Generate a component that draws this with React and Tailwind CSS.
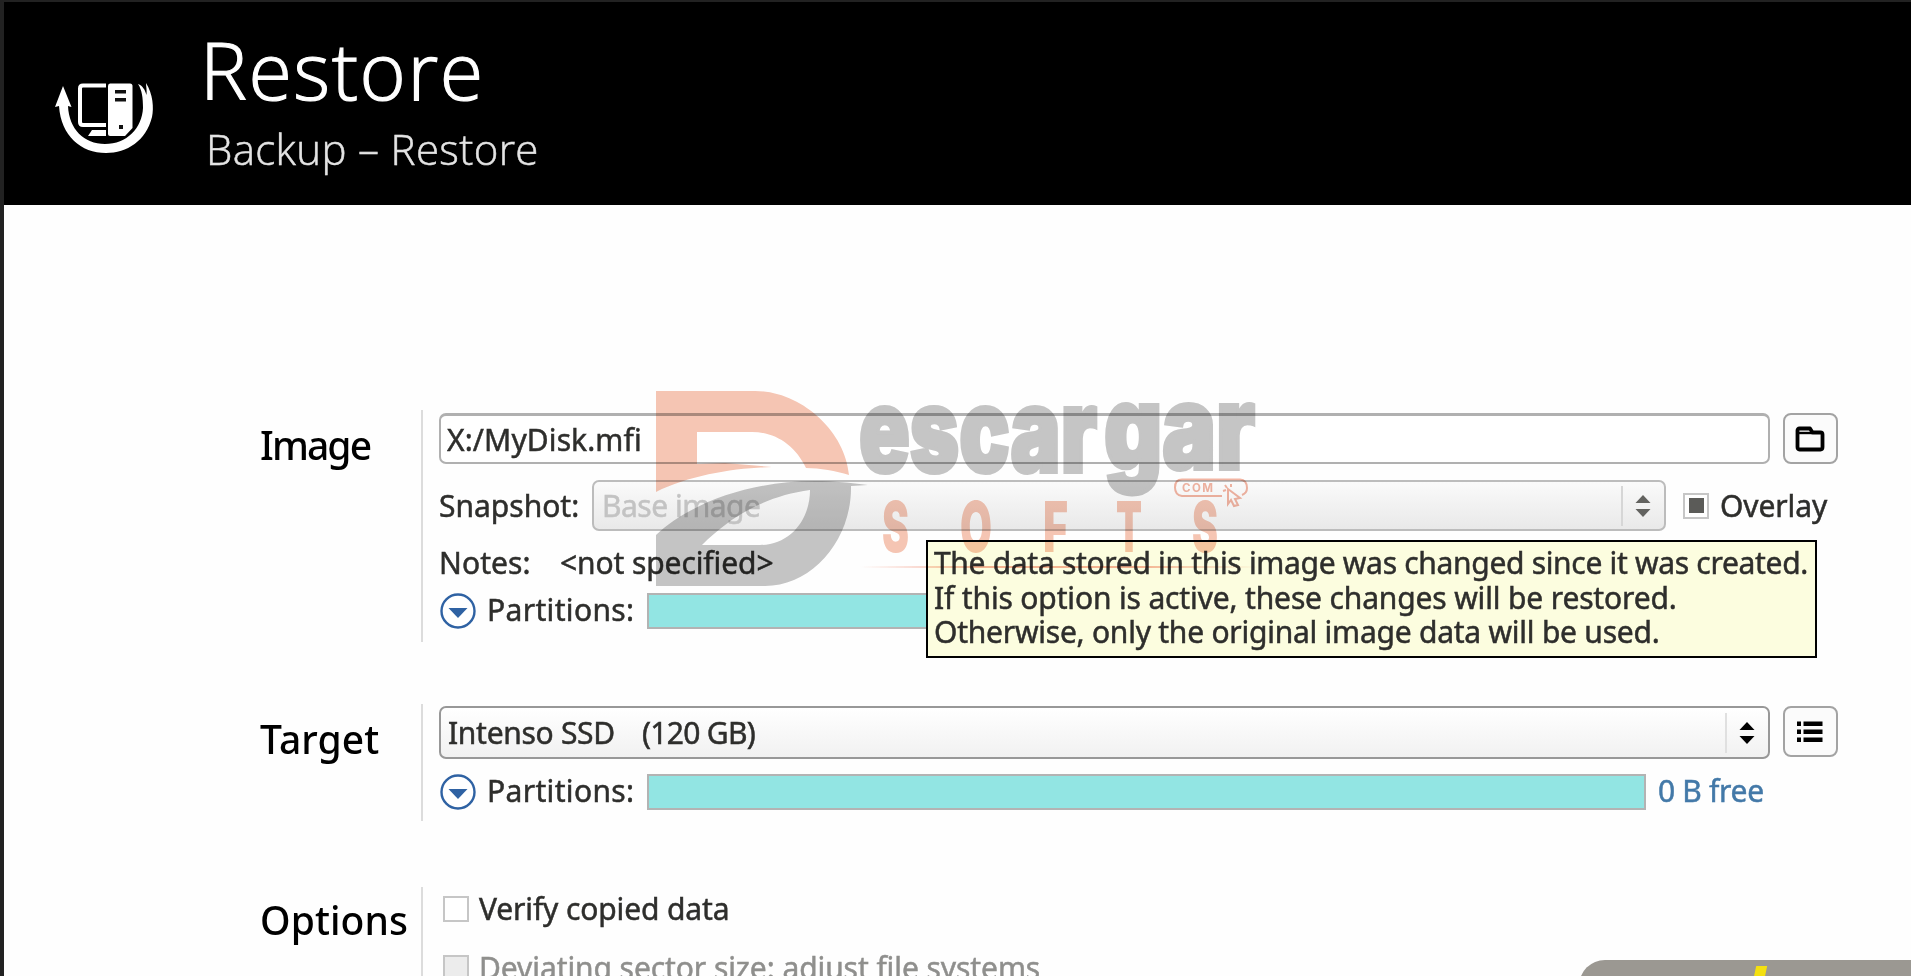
import { useState } from 'react';
import clsx from 'clsx';

const tooltipLines = [
  { text: 'The data stored in this image was changed since it was created.', spacing: 'tracking-[-0.31px]' },
  { text: 'If this option is active, these changes will be restored.', spacing: 'tracking-[-0.15px]' },
  { text: 'Otherwise, only the original image data will be used.', spacing: 'tracking-[-0.24px]' },
];

const softsLetters = [
  { char: 'S', x: 882, width: 27 },
  { char: 'O', x: 960, width: 32 },
  { char: 'F', x: 1043, width: 25 },
  { char: 'T', x: 1116, width: 26 },
  { char: 'S', x: 1192, width: 26 },
];

function RestoreIcon() {
  return (
    <svg width="100" height="74" viewBox="0 0 100 74" fill="#fff">
      {/* Monitor */}
      <path d="M51 3.500 H28 Q25 3.500 25 6.500 V40 Q25 43 28 43 H51" fill="none" stroke="#fff" strokeWidth="4" />
      <path d="M37 48 H51 V54 H33 Z" />
      {/* Tower */}
      <path d="M51 0 H80 V54 H51 Z" fill="#000" />
      <path d="M55 1.500 H75 Q77.500 1.500 77.500 4 V46 L70 54 H55 Q53 54 53 52 V4 Q53 1.500 55 1.500 Z" />
      <path d="M60 8 H71 V11.500 H60 Z M60 16 H71 V19.500 H60 Z M64 43 H68 V47 H64 Z" fill="#111" />
      {/* Circular arrow */}
      <path d="M8 4 L16.500 25 L13 24 C14 47 29 62 50 62 C72 62 87 46 88 26 C88 16 87 8 83 2 C88 4 90 8 91.500 13 C92 8 91 4 91 1 C98 12 99 26 97 35 C91 59 72 71 51 71 C26 71 6 54 4 24 L0 25 Z" />
    </svg>
  );
}

function FolderIcon() {
  return (
    <svg width="30" height="26" viewBox="0 0 30 26" fill="none" stroke="#000" strokeWidth="3.8" strokeLinejoin="round">
      <path d="M2.500 21 V4.500 Q2.500 2.500 4.500 2.500 H15 L17.500 6.500 H25.500 Q27.500 6.500 27.500 8.500 V21 Q27.500 23.500 25.500 23.500 H4.500 Q2.500 23.500 2.500 21 Z" />
      <path d="M3 7 H17" strokeWidth="2.4" />
    </svg>
  );
}

function ListIcon() {
  return (
    <svg width="26" height="22" viewBox="0 0 26 22" fill="#000">
      <path d="M0 0.500 H4 V5 H0 Z M6.500 0.500 H25.500 V5 H6.500 Z M0 8.500 H4 V13 H0 Z M6.500 8.500 H25.500 V13 H6.500 Z M0 16.500 H4 V21 H0 Z M6.500 16.500 H25.500 V21 H6.500 Z" />
    </svg>
  );
}

function Stepper({ className }) {
  return (
    <svg width="16" height="24" viewBox="0 0 16 24" className={className}>
      <path d="M0.500 9 L8 1 L15.500 9 Z M0.500 15 L8 23 L15.500 15 Z" fill="currentColor" />
    </svg>
  );
}

function ExpandButton() {
  return (
    <button className="flex shrink-0">
      <svg width="38" height="36" viewBox="0 0 38 36">
        <circle cx="19" cy="18" r="16.500" fill="#fff" stroke="#2f62a3" strokeWidth="2.4" />
        <path d="M9.500 15 H28.500 L19 25 Z" fill="#2f62a3" />
      </svg>
    </button>
  );
}

function IconButton({ children }) {
  return (
    <button className="flex h-[51px] w-[55px] shrink-0 items-center justify-center rounded-[8px] border-2 border-[#a3a3a3] bg-[#fbfbfb] pr-[2px]">
      {children}
    </button>
  );
}

function Checkbox({ partial, disabled }) {
  return (
    <span
      className={clsx(
        'flex size-[26px] shrink-0 items-center justify-center border-2 border-[#c6c6c6]',
        disabled ? 'bg-[#ececec]' : 'bg-white'
      )}
    >
      {partial && <span className="size-[15px] bg-[#5b5b58]" />}
    </span>
  );
}

function Section({ title, titleClass, className, children }) {
  return (
    <section className="flex">
      <h2 className={clsx('w-[161px] shrink-0 whitespace-nowrap text-[39px] font-medium text-black [-webkit-text-stroke:0px]', titleClass)}>{title}</h2>
      <div className={clsx('flex-1 border-l-2 border-[#dcdcdc] pl-4', className)}>{children}</div>
    </section>
  );
}

function Watermark() {
  return (
    <svg width="1911" height="976" viewBox="0 0 1911 976" className="pointer-events-none">
      <defs>
        <linearGradient id="rule" x1="0" x2="1">
          <stop offset="0" stopColor="#f6b5a5" stopOpacity="0" />
          <stop offset="0.300" stopColor="#f6b5a5" />
          <stop offset="0.700" stopColor="#f6b5a5" />
          <stop offset="1" stopColor="#f6b5a5" stopOpacity="0" />
        </linearGradient>
      </defs>
      {/* Emblem */}
      <path d="M656 391 H755 C800 391 845 430 849 475 C836 471 820 468 806 468 C795 445 775 432 752 432 H697 V464 L725 463 L772 467 C735 468 690 475 656 492 Z" fill="#f6c6b4" />
      <path fillRule="evenodd" d="M656 535 C690 503 750 481 815 481 C835 481 850 483 868 485 L851 486 C852 540 812 586 765 586 H656 Z M702 545 C730 517 765 496 810 490 C810 520 790 545 760 545 Z" fill="#c5c5c5" />
      <g fontFamily="Inter, Roboto, sans-serif" fontWeight="900">
        <g fill="#c5c5c5" stroke="#c5c5c5" strokeWidth="4">
          <text x="859" y="472" fontSize="117" textLength="238" lengthAdjust="spacingAndGlyphs">escar</text>
          <text x="1104" y="469" fontSize="117" textLength="151" lengthAdjust="spacingAndGlyphs">gar</text>
        </g>
        <g fill="#f6c6b4">
          {softsLetters.map((l, i) => (
            <text key={i} x={l.x} y="552" fontSize="70" textLength={l.width} lengthAdjust="spacingAndGlyphs">{l.char}</text>
          ))}
        </g>
        <text x="1182" y="492" fontSize="11.500" fontWeight="700" textLength="31" fill="#f3b5a3">COM</text>
      </g>
      <path d="M1222 496 H1182 Q1175 495 1175 487.500 Q1175 479.500 1182 479.500 H1240 Q1247 480 1247 488 Q1247 493 1242 495" fill="none" stroke="#f3b5a3" strokeWidth="2" />
      <path d="M1228 489 L1240 498 L1235 499 L1238 505 L1234 506 L1231 500 L1228 504 Z M1223 491 L1226 490 M1225 485 L1227 488 M1231 484 V487" fill="none" stroke="#f3b5a3" strokeWidth="2" />
      <rect x="860" y="566" width="400" height="2" fill="url(#rule)" />
    </svg>
  );
}

export default function App() {
  const [path, setPath] = useState('X:/MyDisk.mfi');

  return (
    <div className="relative h-[976px] w-full overflow-hidden border-l-4 border-t-2 border-[#222] bg-[#fefefe] font-['Noto_Sans','Open_Sans',sans-serif] text-[30px] leading-[36px] text-[#2e2e2c] [-webkit-text-stroke:0.5px]">
      {/* Title bar */}
      <header className="flex h-[203px] bg-black text-white">
        <div className="w-[202px] shrink-0 pl-[51px] pt-[80px]">
          <RestoreIcon />
        </div>
        <div className="font-['Open_Sans',sans-serif] font-light">
          <h1 className="-ml-[6px] pt-[28px] text-[79px] leading-[80px] tracking-[1.5px] [-webkit-text-stroke:1.2px]">Restore</h1>
          <p className="mt-[14px] text-[42px] leading-[50px] tracking-[0.35px] text-[#e4e4e4]">Backup – Restore</p>
        </div>
      </header>

      <main className="flex flex-col pl-[256px] pt-[205px]">
        <Section title="Image" titleClass="leading-[70px] tracking-[-1.9px]" className="h-[232px] pt-[3px]">
          <div className="flex gap-[13px]">
            <input
              value={path}
              onChange={e => setPath(e.target.value)}
              className="h-[51px] w-[1331px] rounded-[7px] border-2 border-t-[3px] border-[#b0b0b0] bg-white pl-[6px] tracking-[0.1px] outline-none"
            />
            <IconButton><FolderIcon /></IconButton>
          </div>

          <div className="mt-[16px] flex items-center">
            <span className="w-[153px]">Snapshot:</span>
            <div className="flex h-[51px] w-[1074px] items-center rounded-[7px] border-2 border-[#bcbcbc] bg-gradient-to-b from-[#fafafa] to-[#e9e9e9] pl-[8px] text-[#c3c3c3]">
              <span className="flex-1 tracking-[-0.5px]">Base image</span>
              <span className="flex h-[40px] w-[43px] items-center border-l-2 border-[#d6d6d6] pl-[12px]">
                <Stepper className="text-[#62625f]" />
              </span>
            </div>
            <label className="ml-[17px] flex items-center gap-[11px] tracking-[-0.1px]">
              <Checkbox partial />
              Overlay
            </label>
          </div>

          <div className="flex h-[62px] items-center pt-[2px]">
            <span className="w-[121px] tracking-[0.1px]">Notes:</span>
            <span className="tracking-[-0.1px]">&lt;not specified&gt;</span>
          </div>

          <div className="flex h-[36px]">
            <ExpandButton />
            <span className="ml-[10px] w-[160px] leading-[34px] tracking-[0.35px]">Partitions:</span>
            <div className="h-[36px] w-[999px] border-2 border-[#b3b3b3] bg-[#92e5e3]" />
          </div>
        </Section>

        <div className="mt-[62px]">
          <Section title="Target" titleClass="leading-[69px] tracking-[0.1px]" className="h-[117px] pt-[2px]">
            <div className="flex gap-[13px]">
              <div className="flex h-[53px] w-[1331px] items-center rounded-[7px] border-2 border-[#989898] bg-gradient-to-b from-white to-[#f1f1f1] pl-[7px]">
                <span className="w-[194px] tracking-[-0.3px]">Intenso SSD</span>
                <span className="flex-1 tracking-[-0.7px]">(120 GB)</span>
                <span className="flex h-[40px] w-[43px] items-center border-l-2 border-[#e0e0e0] pl-[12px]">
                  <Stepper className="text-black" />
                </span>
              </div>
              <IconButton><ListIcon /></IconButton>
            </div>
            <div className="mt-[15px] flex h-[36px]">
              <ExpandButton />
              <span className="ml-[10px] w-[160px] leading-[34px] tracking-[0.35px]">Partitions:</span>
              <div className="h-[36px] w-[999px] border-2 border-[#b3b3b3] bg-[#92e5e3]" />
              <span className="ml-[12px] leading-[34px] tracking-[-0.3px] text-[#4379a8]">0 B free</span>
            </div>
          </Section>
        </div>

        <div className="mt-[66px]">
          <Section title="Options" titleClass="leading-[65px] tracking-[0.1px]" className="h-[140px] pt-[9px]">
            <label className="ml-[4px] flex h-[26px] items-center gap-[10px] tracking-[-0.13px]">
              <Checkbox />
              Verify copied data
            </label>
            <label className="ml-[4px] mt-[33px] flex h-[26px] items-center gap-[10px] tracking-[-0.08px] text-[#8f8f8d]">
              <Checkbox disabled />
              Deviating sector size: adjust file systems
            </label>
          </Section>
        </div>
      </main>

      {/* Overlay hint */}
      <div className="absolute left-[922px] top-[538px] h-[118px] w-[891px] whitespace-nowrap border-2 border-black bg-[#fcfddf] pl-[6px] pt-[4px]">
        {tooltipLines.map(line => (
          <p key={line.text} className={clsx('leading-[34.700px]', line.spacing)}>{line.text}</p>
        ))}
      </div>

      {/* Corner panel */}
      <div className="absolute left-[1575px] top-[958px] h-[60px] w-[400px] rounded-tl-[26px] bg-[#9b9892]">
        <div className="ml-[174px] mt-[6px] h-[30px] w-[11px] -skew-x-12 bg-[#f4e00f]" />
      </div>

      <div className="absolute -left-1 -top-0.5 mix-blend-multiply [-webkit-text-stroke:0px]">
        <Watermark />
      </div>
    </div>
  );
}
